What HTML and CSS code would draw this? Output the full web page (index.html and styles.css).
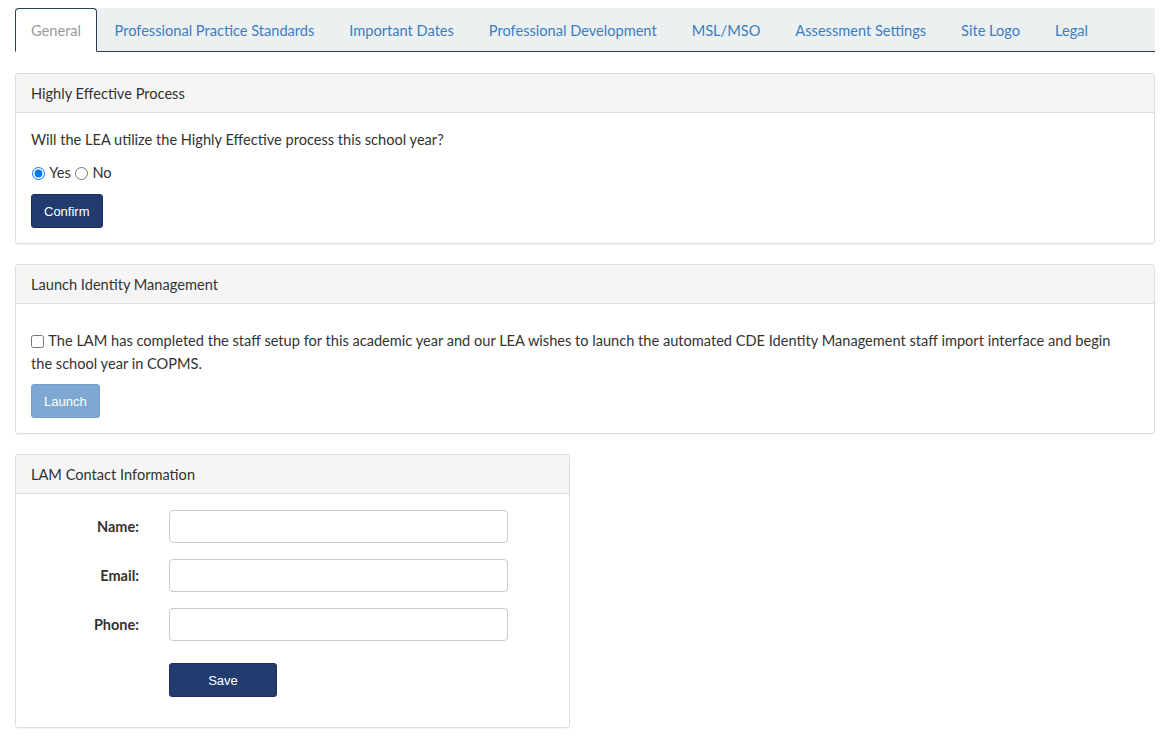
FILE: index.html
```html
<!DOCTYPE html>
<html>
<head>
    <meta charset="utf-8">
    <title>General Settings</title>
    <link rel="stylesheet" href="styles.css">
</head>
<body>
    <div class="page">

        <ul class="tabs">
            <li class="tab active"><a href="#">General</a></li>
            <li class="tab"><a href="#">Professional Practice Standards</a></li>
            <li class="tab"><a href="#">Important Dates</a></li>
            <li class="tab"><a href="#">Professional Development</a></li>
            <li class="tab"><a href="#">MSL/MSO</a></li>
            <li class="tab"><a href="#">Assessment Settings</a></li>
            <li class="tab"><a href="#">Site Logo</a></li>
            <li class="tab"><a href="#">Legal</a></li>
        </ul>

        <div class="panel">
            <div class="panel-heading">Highly Effective Process</div>
            <div class="panel-body">
                <p class="question">Will the LEA utilize the Highly Effective process this school year?</p>
                <div class="radio-row">
                    <label><input type="radio" name="he" checked> Yes</label>
                    <label><input type="radio" name="he"> No</label>
                </div>
                <button class="btn btn-primary">Confirm</button>
            </div>
        </div>

        <div class="panel">
            <div class="panel-heading">Launch Identity Management</div>
            <div class="panel-body">
                <p class="launch-text"><label><input type="checkbox"> The LAM has completed the staff setup for this academic year and our LEA wishes to launch the automated CDE Identity Management staff import interface and begin the school year in COPMS.</label></p>
                <button class="btn btn-disabled" disabled>Launch</button>
            </div>
        </div>

        <div class="panel panel-half">
            <div class="panel-heading">LAM Contact Information</div>
            <div class="panel-body">
                <div class="form-row">
                    <label class="form-label">Name:</label>
                    <input class="form-input" type="text">
                </div>
                <div class="form-row">
                    <label class="form-label">Email:</label>
                    <input class="form-input" type="text">
                </div>
                <div class="form-row">
                    <label class="form-label">Phone:</label>
                    <input class="form-input" type="text">
                </div>
                <div class="form-row">
                    <span class="form-label"></span>
                    <button class="btn btn-primary btn-save">Save</button>
                </div>
            </div>
        </div>

    </div>
</body>
</html>
```

FILE: styles.css
```css
*, *::before, *::after {
    box-sizing: border-box;
}

body {
    margin: 0;
    padding: 0;
    font-family: Lato, "Open Sans", sans-serif;
    font-size: 14.6px;
    color: #333;
    background: #fff;
}

.page {
    padding: 8px 11px 0 15px;
}

/* tabs */
.tabs {
    display: flex;
    list-style: none;
    margin: 0 0 21px 0;
    padding: 0;
    height: 44px;
    background: #ecf0f1;
    border-bottom: 1px solid #2c3e50;
}

.tab {
    margin-bottom: -1px;
}

.tab a {
    display: block;
    height: 44px;
    padding: 1px 16.5px 0;
    line-height: 42px;
    color: #3a7ec4;
    text-decoration: none;
    border: 1px solid transparent;
    border-radius: 4px 4px 0 0;
}

.tab.active a {
    color: #999;
    background: #fff;
    border-color: #2c3e50;
    border-bottom-color: #fff;
    padding: 1px 15px 0;
}

/* panels */
.panel {
    border: 1px solid #ddd;
    border-radius: 3px;
    margin-bottom: 20px;
    box-shadow: 0 1px 1px rgba(0, 0, 0, 0.05);
}

.panel-half {
    width: 555px;
}

.panel-heading {
    background: #f5f5f5;
    border-bottom: 1px solid #ddd;
    height: 39px;
    padding: 2px 15px 0;
    line-height: 36px;
    border-radius: 3px 3px 0 0;
}

.panel-body {
    padding: 15px;
}

.question {
    margin: 1px 0 11px 0;
    line-height: 22px;
}

.radio-row {
    display: flex;
    gap: 3px;
    line-height: 22px;
    margin-bottom: 10px;
}

.radio-row input {
    margin: 0 1px 0 1px;
    vertical-align: -2px;
}

.launch-text {
    margin: 10px 20px 9px 0;
    line-height: 23px;
}

.launch-text input {
    margin: 0 1px 0 0;
    vertical-align: -2px;
}

.btn {
    font-family: "Liberation Sans Narrow", "Liberation Sans", sans-serif;
    font-size: 13px;
    height: 34px;
    padding: 0 12px;
    border-radius: 3px;
    border: 1px solid transparent;
    color: #fff;
    cursor: pointer;
}

.btn-primary {
    background: #233c6f;
    border-color: #1b2f57;
}

.btn-disabled {
    background: #7ea8d1;
    border-color: #76a0ca;
    cursor: not-allowed;
}

.btn-save {
    width: 108px;
    margin-top: 6px;
    margin-bottom: 15px;
}

/* contact form */
.form-row {
    display: flex;
    align-items: center;
    margin-bottom: 16px;
}

.form-row:first-child {
    margin-top: 1px;
}

.form-label {
    width: 108px;
    margin-right: 30px;
    text-align: right;
    font-weight: bold;
    font-size: 14.5px;
}

.form-input {
    width: 339px;
    height: 33px;
    border: 1px solid #ccc;
    border-radius: 4px;
    padding: 6px 12px;
    font-size: 14px;
}

.form-row:last-child {
    margin-bottom: 0;
}
```
